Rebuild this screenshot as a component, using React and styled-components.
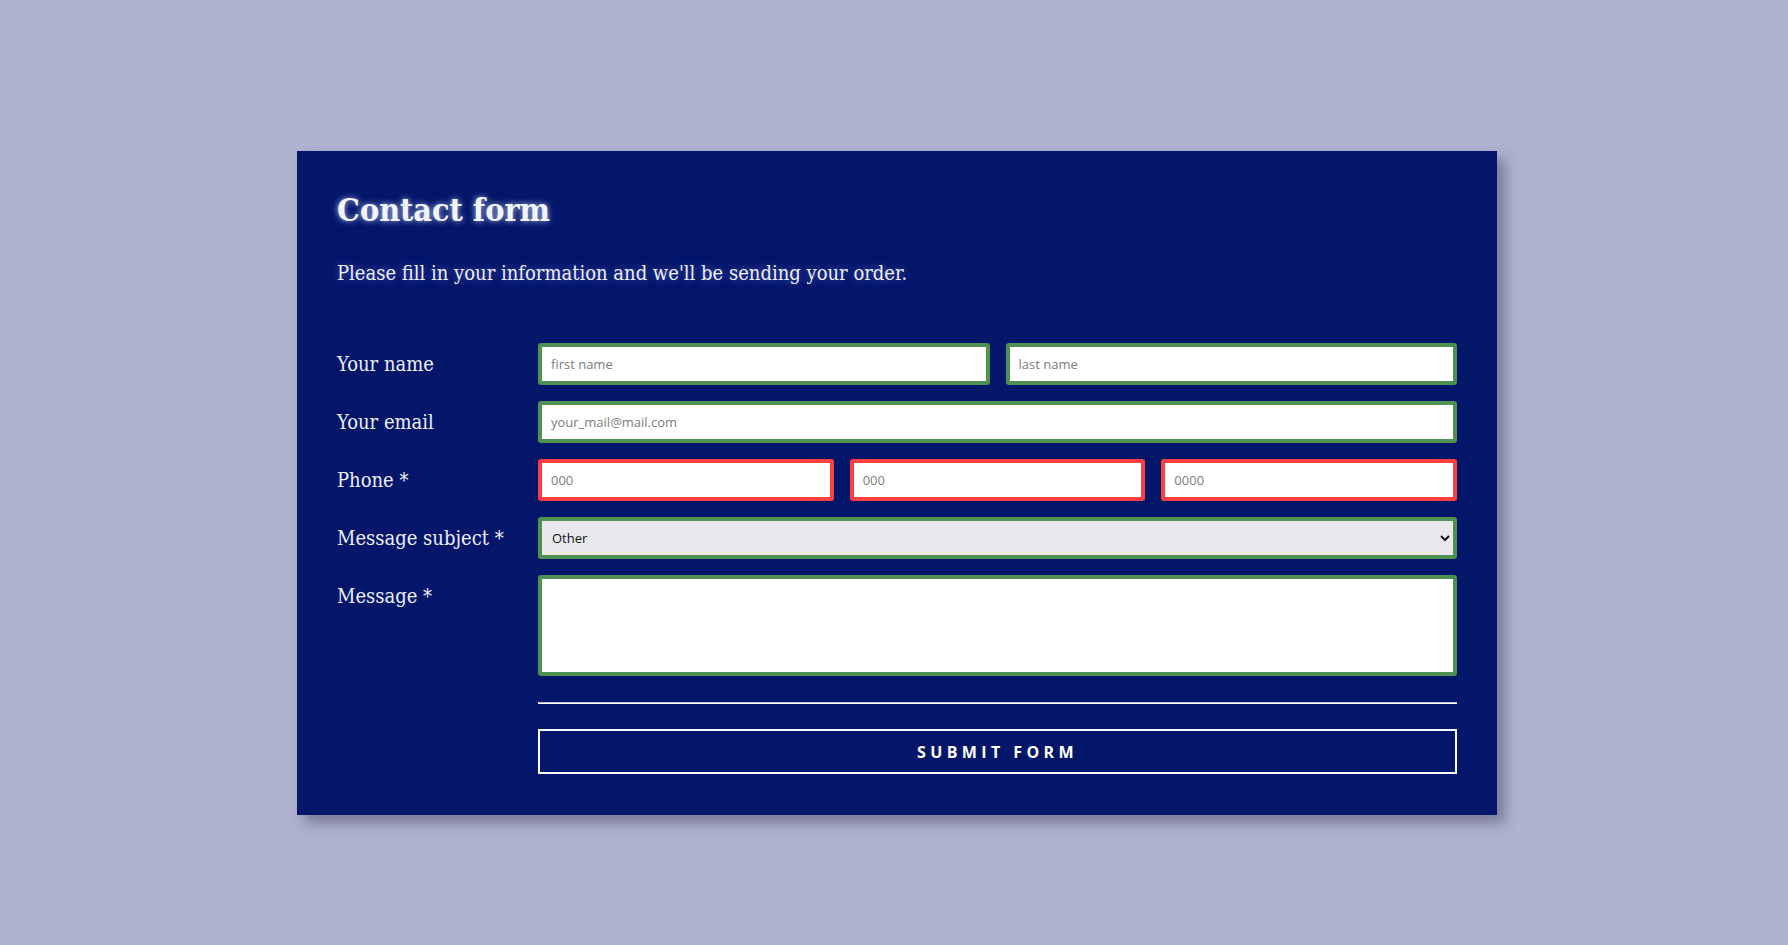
import React from 'react'
import styled, { createGlobalStyle } from 'styled-components'

const GlobalStyle = createGlobalStyle`
  html, body {
    margin: 0;
    padding: 0;
    background: #aeb2cf;
  }
`

const Page = styled.div`
  min-height: 945px;
  display: flex;
  justify-content: center;
  padding: 151px 0 0 6px;
  box-sizing: border-box;
`

const Card = styled.div`
  width: 1200px;
  box-sizing: border-box;
  padding: 40px 40px 41px;
  background: #03166a;
  box-shadow: 8px 8px 12px rgba(60, 60, 80, 0.45);
  align-self: flex-start;
`

const Title = styled.h1`
  margin: 0;
  font-family: "DejaVu Serif", serif;
  font-stretch: condensed;
  font-size: 32px;
  line-height: 38px;
  font-weight: bold;
  color: #f2f5ff;
  text-shadow: 0 0 6px rgba(210, 225, 255, 0.85);
`

const Intro = styled.p`
  margin: 30px 0 0;
  font-family: "DejaVu Serif", serif;
  font-stretch: condensed;
  font-size: 20px;
  line-height: 28px;
  color: #eef0ff;
  text-shadow: 0 0 8px rgba(140, 140, 255, 0.6);
`

const Form = styled.form`
  margin-top: 56px;
  display: flex;
  flex-direction: column;
  gap: 16px;
`

const Row = styled.div`
  display: grid;
  grid-template-columns: 201px 1fr;
  align-items: start;
`

const Label = styled.label`
  font-family: "DejaVu Serif", serif;
  font-stretch: condensed;
  font-size: 20px;
  line-height: 42px;
  color: #eef0ff;
`

const Fields = styled.div`
  display: grid;
  grid-template-columns: repeat(${p => p.cols}, 1fr);
  gap: 16px;
`

const Input = styled.input`
  height: 42px;
  box-sizing: border-box;
  border: 4px solid ${p => (p.invalid ? '#fe4040' : '#4e9150')};
  border-radius: 3px;
  padding: 0 9px;
  background: #fff;
  font-family: "Open Sans", sans-serif;
  font-size: 13px;
  color: #222;
  outline: none;
  min-width: 0;
  &::placeholder {
    color: #7d7d7d;
  }
`

const Select = styled.select`
  height: 42px;
  box-sizing: border-box;
  border: 4px solid #4e9150;
  border-radius: 3px;
  padding: 0 6px;
  background: #e9e9ed;
  font-family: "Open Sans", sans-serif;
  font-size: 13px;
  color: #111;
  outline: none;
`

const TextArea = styled.textarea`
  height: 101px;
  box-sizing: border-box;
  border: 4px solid #4e9150;
  border-radius: 3px;
  background: #fff;
  resize: none;
  outline: none;
`

const Footer = styled.div`
  margin: 10px 0 0 201px;
  display: flex;
  flex-direction: column;
  gap: 25px;
`

const Rule = styled.hr`
  margin: 0;
  height: 0;
  border: none;
  border-top: 1px solid #b9bfd8;
  border-bottom: 1px solid #ffffff;
`

const SubmitButton = styled.button`
  height: 45px;
  background: transparent;
  border: 2px solid #ffffff;
  color: #ffffff;
  font-family: "Open Sans", sans-serif;
  font-weight: 700;
  font-size: 16px;
  letter-spacing: 4.4px;
  text-transform: uppercase;
  cursor: pointer;
`

export default function App() {
  return (
    <>
      <GlobalStyle />
      <Page>
        <Card>
          <Title>Contact form</Title>
          <Intro>Please fill in your information and we'll be sending your order.</Intro>
          <Form onSubmit={e => e.preventDefault()}>
            <Row>
              <Label>Your name</Label>
              <Fields cols={2}>
                <Input placeholder="first name" />
                <Input placeholder="last name" />
              </Fields>
            </Row>
            <Row>
              <Label>Your email</Label>
              <Fields cols={1}>
                <Input placeholder="your_mail@mail.com" />
              </Fields>
            </Row>
            <Row>
              <Label>Phone *</Label>
              <Fields cols={3}>
                <Input invalid placeholder="000" />
                <Input invalid placeholder="000" />
                <Input invalid placeholder="0000" />
              </Fields>
            </Row>
            <Row>
              <Label>Message subject *</Label>
              <Fields cols={1}>
                <Select defaultValue="other">
                  <option value="order">Order</option>
                  <option value="support">Support</option>
                  <option value="other">Other</option>
                </Select>
              </Fields>
            </Row>
            <Row>
              <Label>Message *</Label>
              <Fields cols={1}>
                <TextArea />
              </Fields>
            </Row>
            <Footer>
              <Rule />
              <SubmitButton type="submit">Submit form</SubmitButton>
            </Footer>
          </Form>
        </Card>
      </Page>
    </>
  )
}
